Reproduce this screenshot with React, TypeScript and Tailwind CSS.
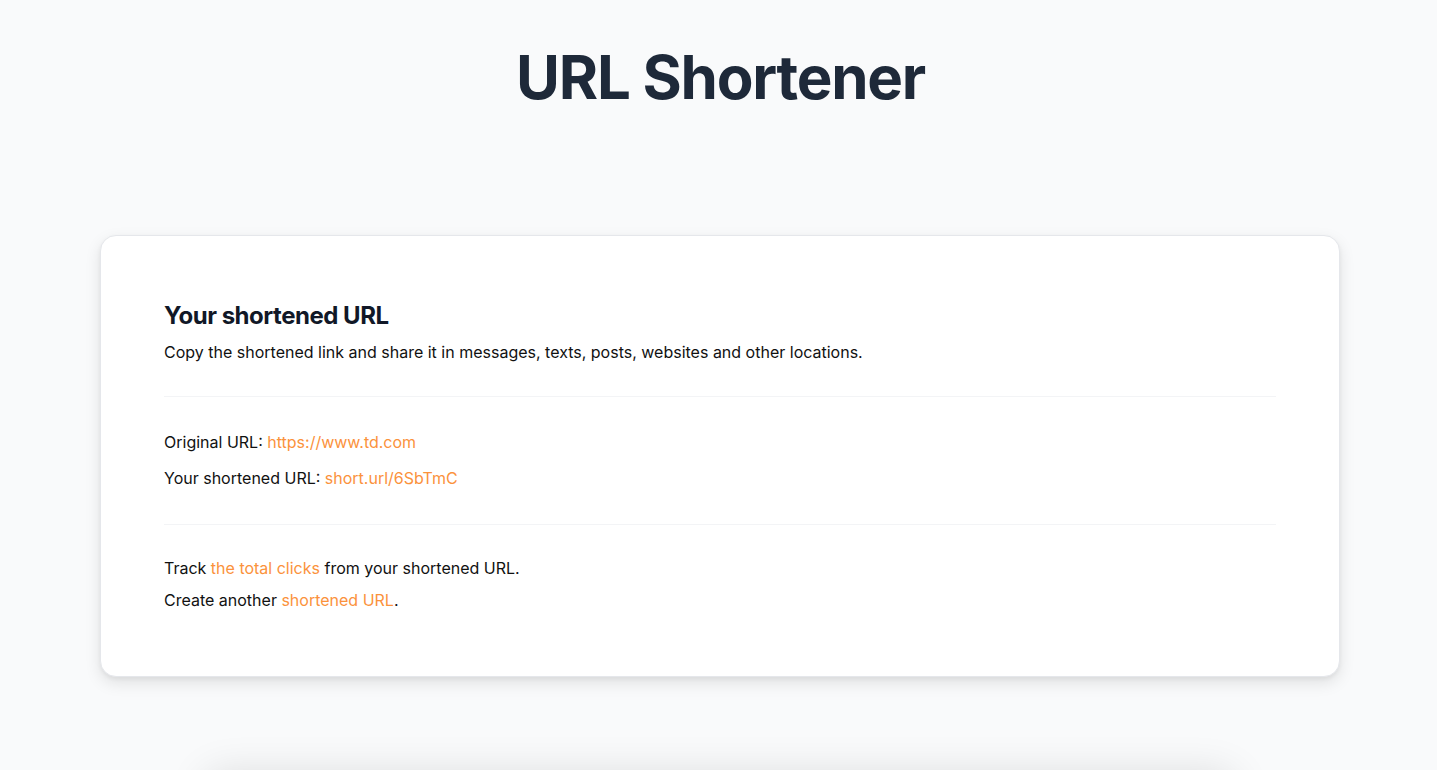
export default function App() {
  return (
    <div className="h-screen overflow-hidden bg-gray-50 font-['Inter',sans-serif]">
      <h1 className="pt-[47px] pl-1 text-center text-6xl leading-[60px] font-bold tracking-[-0.021em] text-gray-800">
        URL Shortener
      </h1>

      <div className="ml-[100px] mt-32 w-[1240px] rounded-2xl border border-gray-200 bg-white px-[63px] pt-16 pb-[64px] shadow-[0_6px_16px_rgba(0,0,0,0.1),0_2px_4px_rgba(0,0,0,0.05)]">
        <h2 className="text-2xl leading-8 font-bold tracking-[-0.02em] text-[#111827]">Your shortened URL</h2>
        <p className="mt-2 text-base leading-6 text-[#111]">
          Copy the shortened link and share it in messages, texts, posts, websites and other locations.
        </p>

        <hr className="mt-8 border-gray-100" />

        <div className="mt-[33px] flex flex-col gap-3 text-base leading-6 text-[#111]">
          <p>
            Original URL: <a className="text-[#fb923c]">https://www.td.com</a>
          </p>
          <p>
            Your shortened URL: <a className="text-[#fb923c]">short.url/6SbTmC</a>
          </p>
        </div>

        <hr className="mt-[34px] border-gray-100" />

        <div className="mt-[31px] flex flex-col gap-2 text-base leading-6 text-[#111]">
          <p>
            Track <a className="text-[#fb923c]">the total clicks</a> from your shortened URL.
          </p>
          <p>
            Create another <a className="text-[#fb923c]">shortened URL</a>.
          </p>
        </div>
      </div>

      <div className="ml-[205px] mt-[96px] h-40 w-[1030px] rounded-2xl bg-white shadow-[0_0_40px_rgba(0,0,0,0.12)]" />
    </div>
  );
}
